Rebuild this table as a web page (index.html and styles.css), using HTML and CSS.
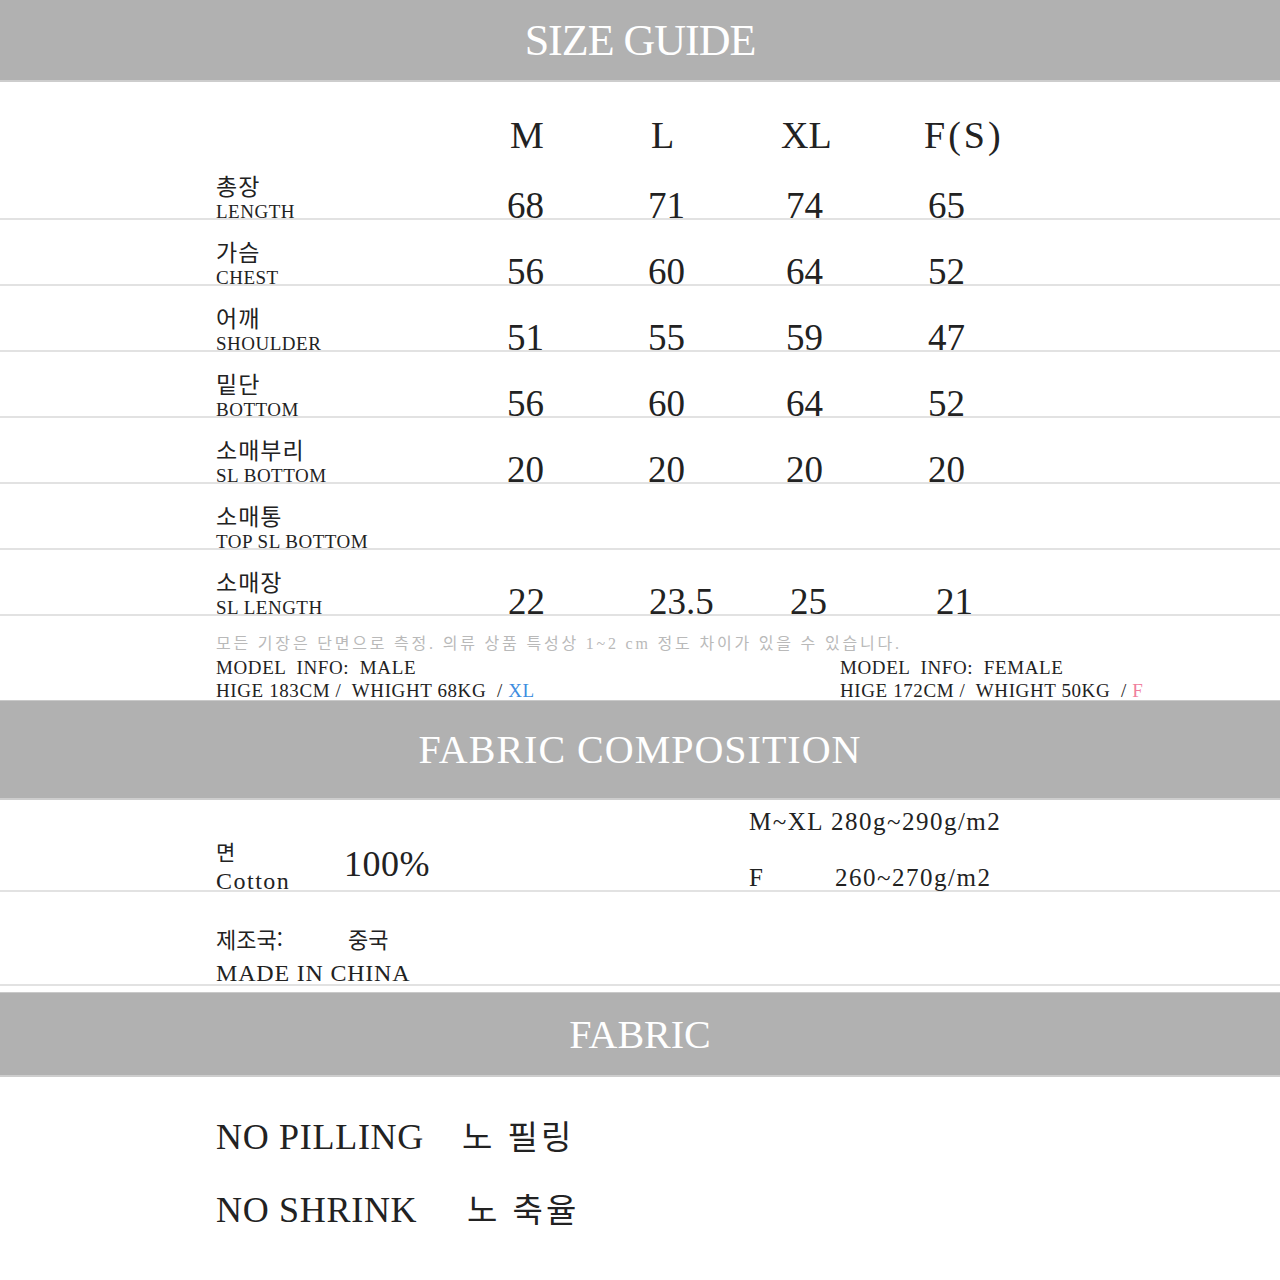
FILE: index.html
```html
<!DOCTYPE html>
<html lang="ko">
<head>
<meta charset="utf-8">
<title>Size Guide</title>
<link rel="stylesheet" href="styles.css">
</head>
<body>
<header class="band band-top"><h1 class="band-title">SIZE GUIDE</h1></header>

<section class="size">
  <div class="size-head"><span></span><span>M</span><span>L</span><span>XL</span><span class="fs">F(S)</span></div>
  <div class="size-row"><div class="lbl"><span class="ko">총장</span><span class="en">LENGTH</span></div><span class="val">68</span><span class="val">71</span><span class="val">74</span><span class="val">65</span></div>
  <div class="size-row"><div class="lbl"><span class="ko">가슴</span><span class="en">CHEST</span></div><span class="val">56</span><span class="val">60</span><span class="val">64</span><span class="val">52</span></div>
  <div class="size-row"><div class="lbl"><span class="ko">어깨</span><span class="en">SHOULDER</span></div><span class="val">51</span><span class="val">55</span><span class="val">59</span><span class="val">47</span></div>
  <div class="size-row"><div class="lbl"><span class="ko">밑단</span><span class="en">BOTTOM</span></div><span class="val">56</span><span class="val">60</span><span class="val">64</span><span class="val">52</span></div>
  <div class="size-row"><div class="lbl"><span class="ko">소매부리</span><span class="en">SL BOTTOM</span></div><span class="val">20</span><span class="val">20</span><span class="val">20</span><span class="val">20</span></div>
  <div class="size-row"><div class="lbl"><span class="ko">소매통</span><span class="en">TOP SL BOTTOM</span></div></div>
  <div class="size-row size-row-last"><div class="lbl"><span class="ko">소매장</span><span class="en">SL LENGTH</span></div><span class="val">22</span><span class="val">23.5</span><span class="val">25</span><span class="val">21</span></div>
</section>

<section class="notes">
  <p class="note">모든 기장은 단면으로 측정. 의류 상품 특성상 1~2 cm 정도 차이가 있을 수 있습니다.</p>
  <div class="models">
    <div class="model"><p>MODEL  INFO:  MALE</p><p>HIGE 183CM /  WHIGHT 68KG  / <span class="tag-xl">XL</span></p></div>
    <div class="model"><p>MODEL  INFO:  FEMALE</p><p>HIGE 172CM /  WHIGHT 50KG  / <span class="tag-f">F</span></p></div>
  </div>
</section>

<header class="band band-mid"><h2 class="band-title">FABRIC COMPOSITION</h2></header>

<section class="comp">
  <div class="comp-row comp-1">
    <div class="cotton"><span class="ko-sm">면</span><span class="cotton-en">Cotton</span></div>
    <div class="pct">100%</div>
    <div class="weights">
      <p>M~XL 280g~290g/m2</p>
      <p><span class="w-key">F</span>260~270g/m2</p>
    </div>
  </div>
  <div class="comp-row comp-2">
    <div class="origin"><span class="origin-key">제조국:</span><span>중국</span></div>
    <div class="made">MADE IN CHINA</div>
  </div>
</section>

<header class="band band-bot"><h2 class="band-title">FABRIC</h2></header>

<section class="fabric-list">
  <div class="fab-line"><span class="fab-en w1">NO PILLING</span><span class="fab-ko">노 필링</span></div>
  <div class="fab-line"><span class="fab-en w2">NO SHRINK</span><span class="fab-ko">노 축율</span></div>
</section>
</body>
</html>
```

FILE: styles.css
```css
body {
  margin: 0;
  background: #fff;
  color: #222;
  font-family: "Liberation Serif", "Noto Sans CJK KR", serif;
}

/* grey title bands */
.band {
  background: #b1b1b1;
  color: #fff;
  text-align: center;
  border-top: 1px solid #c9c9c9;
  border-bottom: 2px solid #cdcdcd;
}
.band-title {
  margin: 0;
  font-weight: 400;
  font-family: "Liberation Serif", serif;
}
.band-top { border-top: 0; }
.band-top .band-title {
  font-size: 44px;
  letter-spacing: -1px;
  line-height: 78px;
  padding-top: 2px;
}
.band-mid .band-title {
  font-size: 40px;
  letter-spacing: 1px;
  line-height: 97px;
}
.band-bot { margin-top: 6px; }
.band-bot .band-title {
  font-size: 40px;
  line-height: 80px;
  padding-top: 2px;
}

/* size table */
.size-head {
  display: grid;
  grid-template-columns: 294px 141px 130px 143px 1fr;
  align-items: end;
  box-sizing: border-box;
  height: 72px;
  padding: 0 0 4px 216px;
  font-size: 38px;
  line-height: 30px;
}
.fs { letter-spacing: 3px; }
.size-row {
  display: grid;
  grid-template-columns: 291px 141px 138px 142px 1fr;
  align-items: end;
  height: 64px;
  padding-left: 216px;
  border-bottom: 2px solid #e2e2e2;
}
.size-row-last {
  grid-template-columns: 292px 141px 141px 146px 1fr;
}
.lbl {
  display: flex;
  flex-direction: column;
  align-items: flex-start;
}
.ko {
  font-family: "Noto Sans CJK KR", sans-serif;
  font-size: 23px;
  line-height: 22px;
  letter-spacing: 1px;
  margin-bottom: 9px;
}
.en {
  font-size: 19px;
  line-height: 13px;
  letter-spacing: 0.5px;
}
.val {
  font-size: 37px;
  line-height: 24px;
}

/* notes */
.notes {
  box-sizing: border-box;
  height: 84px;
  padding: 18px 0 0 216px;
}
.note {
  margin: 0;
  font-size: 16px;
  line-height: 20px;
  letter-spacing: 2.8px;
  color: #b9b9b9;
}
.models {
  display: grid;
  grid-template-columns: 624px auto;
  margin-top: 2px;
}
.model p {
  margin: 0;
  font-size: 19px;
  line-height: 23px;
  letter-spacing: 0.6px;
  white-space: pre;
}
.tag-xl { color: #3d8de0; }
.tag-f { color: #f07f9c; }

/* fabric composition */
.comp-row {
  display: flex;
  padding-left: 216px;
  border-bottom: 2px solid #e2e2e2;
}
.comp-1 { height: 90px; }
.cotton {
  width: 128px;
  align-self: flex-end;
  display: flex;
  flex-direction: column;
}
.ko-sm {
  font-family: "Noto Sans CJK KR", sans-serif;
  font-size: 21px;
  line-height: 21px;
  margin-bottom: 10px;
}
.cotton-en {
  font-size: 24px;
  line-height: 18px;
  letter-spacing: 1.5px;
}
.pct {
  width: 405px;
  align-self: flex-end;
  margin-bottom: 13px;
  font-size: 36px;
  line-height: 26px;
  letter-spacing: 0.5px;
}
.weights {
  align-self: flex-end;
  margin-bottom: 2px;
  font-size: 25px;
  letter-spacing: 1.5px;
}
.weights p {
  margin: 0;
  line-height: 20px;
}
.weights p + p { margin-top: 36px; }
.w-key {
  display: inline-block;
  width: 86px;
}
.comp-2 {
  height: 92px;
  flex-direction: column;
  justify-content: flex-end;
}
.origin {
  display: flex;
  font-family: "Noto Sans CJK KR", sans-serif;
  font-size: 22px;
  line-height: 21px;
  margin-bottom: 15px;
}
.origin-key { width: 132px; }
.made {
  margin-bottom: 2px;
  font-size: 24px;
  line-height: 18px;
  letter-spacing: 0.8px;
}

/* fabric list */
.fabric-list {
  padding: 38px 0 0 216px;
}
.fab-line {
  display: flex;
  align-items: baseline;
}
.fab-line + .fab-line { margin-top: 31px; }
.fab-en {
  font-size: 36px;
  line-height: 40px;
  letter-spacing: 0.7px;
}
.w1 { width: 246px; }
.w2 { width: 251px; }
.fab-ko {
  font-family: "Noto Sans CJK KR", sans-serif;
  font-size: 33px;
  line-height: 40px;
  letter-spacing: 3px;
}
```
